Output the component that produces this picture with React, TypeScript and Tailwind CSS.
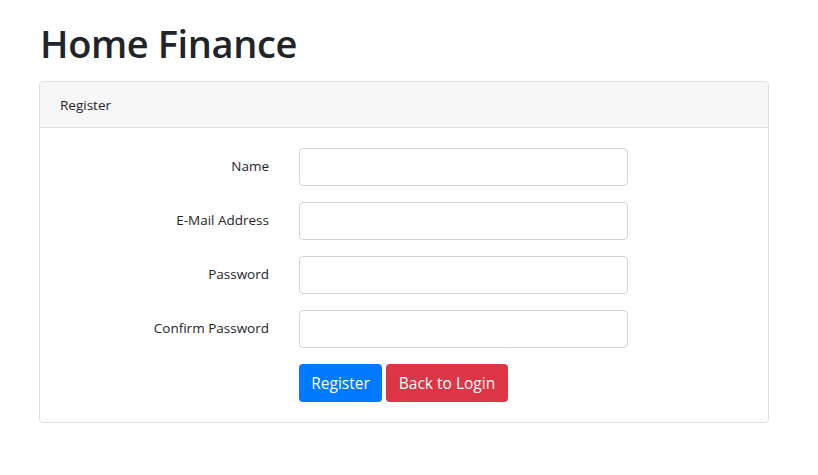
import React from 'react';

const fields = [
  { label: 'Name', type: 'text' },
  { label: 'E-Mail Address', type: 'email' },
  { label: 'Password', type: 'password' },
  { label: 'Confirm Password', type: 'password' },
];

export default function App() {
  return (
    <div
      className="min-h-[475px] bg-white text-[#212529]"
      style={{ fontFamily: '"Open Sans", "Noto Sans", sans-serif' }}
    >
      <div className="pl-[39px] pt-[19px]">
        <h1 className="mb-[14px] pl-px text-[38px] font-semibold leading-[48px] tracking-[-0.4px]">
          Home Finance
        </h1>

        <div className="w-[730px] rounded-[4px] border border-[#dfdfdf]">
          <div className="rounded-t-[4px] border-b border-[#dfdfdf] bg-[#f7f7f7] px-5 pt-[13px] pb-[11px] text-[13.5px] leading-[21px]">
            Register
          </div>

          <div className="flex flex-col gap-4 p-5">
            {fields.map((f) => (
              <div key={f.label} className="flex items-center gap-[30px]">
                <label className="-mt-[2px] w-[209px] text-right text-[13.5px] leading-[22px]">{f.label}</label>
                <input
                  type={f.type}
                  className="h-[38px] w-[329px] rounded-[4px] border border-[#ced4da] px-3 text-base outline-none"
                />
              </div>
            ))}

            <div className="flex gap-[4px] pl-[239px]">
              <button className="h-[38px] w-[83px] rounded-[4px] bg-[#007bff] pt-px text-[15.5px] text-white">
                Register
              </button>
              <button className="h-[38px] w-[122px] rounded-[4px] bg-[#dc3545] pt-px text-[15.5px] text-white">
                Back to Login
              </button>
            </div>
          </div>
        </div>
      </div>
    </div>
  );
}
